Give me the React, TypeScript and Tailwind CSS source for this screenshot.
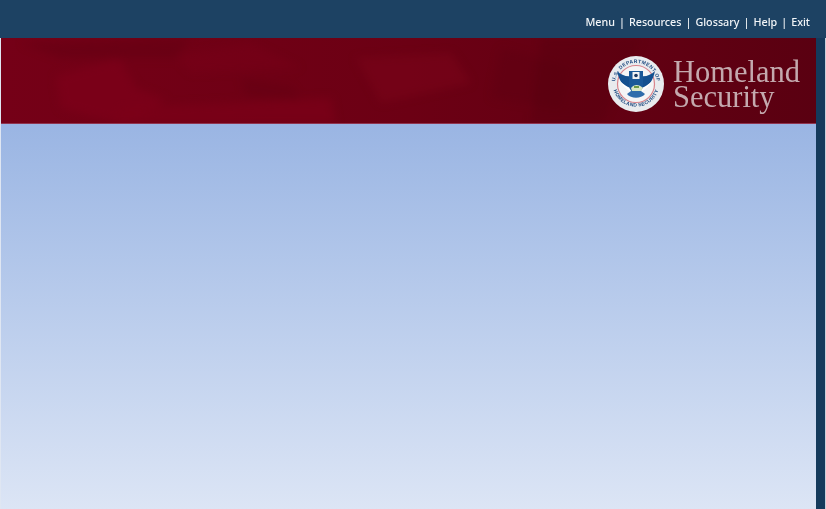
import React from 'react';

const links = ['Menu', 'Resources', 'Glossary', 'Help', 'Exit'];

// DHS seal, drawn small so only the rough shapes show
const Seal = () => (
  <svg width="56" height="56" viewBox="0 0 56 56" className="blur-[0.5px]">
    <defs>
      <path id="sealTop" d="M 8.3 35.2 A 21 21 0 1 1 47.7 35.2" />
      <path id="sealBottom" d="M 5 32 A 23.5 23.5 0 0 0 51 32" />
    </defs>
    <circle cx="28" cy="28" r="28" fill="#e9ebee" />
    <text fontSize="5" fill="#1d4a80" fontFamily="Liberation Sans, sans-serif" fontWeight="700" letterSpacing="0.4">
      <textPath href="#sealTop" startOffset="50%" textAnchor="middle">U.S. DEPARTMENT OF</textPath>
    </text>
    <text fontSize="5" fill="#1d4a80" fontFamily="Liberation Sans, sans-serif" fontWeight="700" letterSpacing="0.2">
      <textPath href="#sealBottom" startOffset="50%" textAnchor="middle">HOMELAND SECURITY</textPath>
    </text>
    <circle cx="28" cy="28" r="18.5" fill="#f4f5f6" stroke="#d8848c" strokeWidth="1.2" />
    {/* wings */}
    <path d="M9 15 C11 25 15 30 22 33 L24 20 C18 21 13 19 9 15Z" fill="#14508f" />
    <path d="M47 15 C45 25 41 30 34 33 L32 20 C38 21 43 19 47 15Z" fill="#14508f" />
    <path d="M12 25 C15 30 18 33 23 36 L23 32 C19 31 15 28 12 25Z" fill="#ffffff" />
    <path d="M44 25 C41 30 38 33 33 36 L33 32 C37 31 41 28 44 25Z" fill="#ffffff" />
    {/* shield */}
    <path d="M21 15 H35 V29 C35 34 31 37 28 38 C25 37 21 34 21 29Z" fill="#1a5898" />
    <path d="M24.5 16 H31.5 V23 H24.5Z" fill="#f2f3f5" />
    <circle cx="28" cy="19.5" r="1.8" fill="#1a3660" />
    {/* land and water */}
    <path d="M23 32 C26 28 31 28 35 32 L33 35 H24Z" fill="#d9e6c4" />
    <path d="M26 30 h5 v2 h-5z" fill="#6d9a46" />
    <path d="M19 38 C23 43 33 43 37 38 L33 35 H23Z" fill="#2e6cab" />
  </svg>
);

export default function App() {
  return (
    <div className="w-[826px] h-[509px] overflow-hidden flex flex-col bg-[#1d4263]">
      <div className="h-[38px] shrink-0 flex items-center justify-end pr-4 pt-[7px] gap-[4px] text-[10.75px] font-medium text-[#f2f5f8] font-['Noto_Sans',sans-serif] blur-[0.3px]">
        {links.map((l, i) => (
          <React.Fragment key={l}>
            {i > 0 && <span>|</span>}
            <span>{l}</span>
          </React.Fragment>
        ))}
      </div>

      <div className="flex-1 flex min-h-0">
        <div className="flex-1 flex flex-col min-w-0 pl-[1px] bg-[#dfe6f2]">
          <div className="relative h-[86px] shrink-0 overflow-hidden bg-gradient-to-r from-[#750017] via-[#6c0014] to-[#5a0011] flex items-center justify-end pr-[16px] pt-[6px] border-b border-[#8f3550]">
            {/* mottled star texture */}
            <svg className="absolute inset-0 blur-[4px]" width="815" height="86" viewBox="0 0 815 86">
              <path d="M55 38 L118 20 L135 50 L165 62 L125 88 L60 70Z" fill="#7e0019" opacity="0.7" />
              <path d="M175 18 L250 5 L300 30 L190 35Z" fill="#7e0019" opacity="0.3" />
              <path d="M20 5 L190 0 L175 20 L60 20Z" fill="#5f0012" opacity="0.4" />
              <path d="M240 40 L290 48 L300 62 L245 58Z" fill="#5c0010" opacity="0.3" />
              <path d="M355 20 L450 15 L470 45 L380 65Z" fill="#7c0419" opacity="0.5" />
              <path d="M500 10 L570 30 L560 70 L490 60Z" fill="#5a0010" opacity="0.3" />
              <path d="M120 70 L330 60 L335 90 L110 90Z" fill="#7c0018" opacity="0.7" />
              <path d="M540 0 L640 0 L600 86 L530 86Z" fill="#52000e" opacity="0.3" />
            </svg>
            <div className="relative flex items-center gap-[9px]">
              <Seal />
              <div className="font-['Liberation_Serif',serif] text-[30.5px] leading-[25px] text-[#c4a9ae] blur-[0.3px] pt-[3px]">
                <div>Homeland</div>
                <div>Security</div>
              </div>
            </div>
          </div>
          <div className="flex-1 bg-gradient-to-b from-[#9ab5e3] to-[#dce5f5]" />
        </div>
        <div className="w-[9px] shrink-0 bg-[#143a5c]" />
        <div className="w-[1px] shrink-0 bg-[#c8d0dc]" />
      </div>
    </div>
  );
}
